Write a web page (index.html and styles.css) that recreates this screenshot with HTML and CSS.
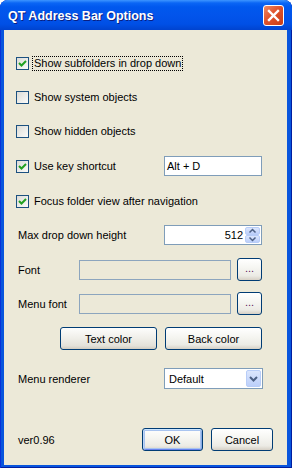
FILE: index.html
```html
<!DOCTYPE html>
<html lang="en">
<head>
    <meta charset="UTF-8">
    <title>QT Address Bar Options</title>
    <link rel="stylesheet" href="styles.css">
</head>
<body>

    <div class="window">
        <div class="titlebar">
            <span class="title">QT Address Bar Options</span>
            <span class="close">
                <svg width="21" height="21" viewBox="0 0 21 21"><path d="M6 6 L15 15 M15 6 L6 15" stroke="#fff" stroke-width="2.4" stroke-linecap="square"/></svg>
            </span>
        </div>

        <div class="client">
            <div class="row r1">
                <span class="check"><svg width="11" height="11" viewBox="0 0 11 11"><path d="M2 5 L4.5 7.5 L9 3" fill="none" stroke="#21a121" stroke-width="2"/></svg></span>
                <span class="cap focus">Show subfolders in drop down</span>
            </div>
            <div class="row r2">
                <span class="check"></span>
                <span class="cap">Show system objects</span>
            </div>
            <div class="row r3">
                <span class="check"></span>
                <span class="cap">Show hidden objects</span>
            </div>
            <div class="row r4">
                <span class="check"><svg width="11" height="11" viewBox="0 0 11 11"><path d="M2 5 L4.5 7.5 L9 3" fill="none" stroke="#21a121" stroke-width="2"/></svg></span>
                <span class="cap">Use key shortcut</span>
                <span class="textbox key">Alt + D</span>
            </div>
            <div class="row r5">
                <span class="check"><svg width="11" height="11" viewBox="0 0 11 11"><path d="M2 5 L4.5 7.5 L9 3" fill="none" stroke="#21a121" stroke-width="2"/></svg></span>
                <span class="cap">Focus folder view after navigation</span>
            </div>
            <div class="row r6">
                <span class="label">Max drop down height</span>
                <span class="textbox spin">
                    <span class="num">512</span>
                    <span class="spinbtns">
                        <span class="sb"><svg width="13" height="8" viewBox="0 0 13 8"><path d="M3.5 5.5 L6.5 2.5 L9.5 5.5" fill="none" stroke="#4d6185" stroke-width="1.5"/></svg></span>
                        <span class="sb"><svg width="13" height="8" viewBox="0 0 13 8"><path d="M3.5 2.5 L6.5 5.5 L9.5 2.5" fill="none" stroke="#4d6185" stroke-width="1.5"/></svg></span>
                    </span>
                </span>
            </div>
            <div class="row r7">
                <span class="label fontlabel">Font</span>
                <span class="textbox ro"></span>
                <span class="btn dots">...</span>
            </div>
            <div class="row r8">
                <span class="label fontlabel">Menu font</span>
                <span class="textbox ro"></span>
                <span class="btn dots">...</span>
            </div>
            <div class="row r9">
                <span class="btn color text-color">Text color</span>
                <span class="btn color">Back color</span>
            </div>
            <div class="row r10">
                <span class="label">Menu renderer</span>
                <span class="combo">
                    <span class="combo-val">Default</span>
                    <span class="combo-btn"><svg width="15" height="17" viewBox="0 0 15 17"><path d="M4 7 L7.5 10.5 L11 7" fill="none" stroke="#4d6185" stroke-width="2"/></svg></span>
                </span>
            </div>
            <div class="row r11">
                <span class="label">ver0.96</span>
                <span class="btn ok">OK</span>
                <span class="btn cancel">Cancel</span>
            </div>
        </div>
    </div>

</body>
</html>
```

FILE: styles.css
```css
body {
    margin: 0;
    padding: 0;
    background-color: #fff;
    font-family: "Liberation Sans", Arial, sans-serif;
    font-size: 11px;
    color: #000;
}

.window {
    width: 292px;
    height: 468px;
    display: flex;
    flex-direction: column;
    background-color: #0855dd;
    border-radius: 8px 8px 0 0;
    box-shadow: inset 1px 0 #0831d9, inset -1px 0 #001ea0, inset 0 -1px #001ea0;
}

.titlebar {
    height: 30px;
    display: flex;
    align-items: center;
    padding-left: 8px;
    border-radius: 8px 8px 0 0;
    background: linear-gradient(#3d95ff 0, #0a66f5 3px, #0058ee 7px, #0254eb 50%, #0050e6 80%, #0043cf 100%);
}

.title {
    flex: 1;
    padding-top: 2px;
    color: #fff;
    font-weight: bold;
    font-size: 12.5px;
    text-shadow: 1px 1px #0a1e80;
}

.close {
    width: 21px;
    height: 21px;
    margin-right: 8px;
    margin-top: 1px;
    box-sizing: border-box;
    border: 1px solid #fff;
    border-radius: 3px;
    background: linear-gradient(135deg, #ec8a66, #e0532c 45%, #c83c14);
    display: flex;
    align-items: center;
    justify-content: center;
}

.close svg {
    margin: -1px;
}

.client {
    flex: 1;
    margin: 0 5px 3px 4px;
    padding: 0 25px 0 12px;
    background-color: #ece9d8;
    display: flex;
    flex-direction: column;
}

.row {
    display: flex;
    align-items: center;
    height: 20px;
}

.r1 { margin-top: 23px; }
.r2 { margin-top: 14px; }
.r3 { margin-top: 14px; }
.r4 { margin-top: 15px; }
.r5 { margin-top: 15px; }
.r6 { margin-top: 14px; }
.r7 { margin-top: 13px; height: 23px; }
.r8 { margin-top: 11px; height: 23px; }
.r9 { margin-top: 12px; height: 23px; }
.r10 { margin-top: 18px; height: 21px; }
.r11 { margin-top: 39px; height: 23px; margin-right: -11px; }

.check {
    width: 13px;
    height: 13px;
    box-sizing: border-box;
    border: 1px solid #1c5180;
    background: linear-gradient(135deg, #dcdcd7, #fbfbf9);
    display: flex;
}

.cap {
    margin-left: 3px;
    padding: 0 1px;
    line-height: 13px;
    border: 1px dotted transparent;
}

.cap.focus {
    border-color: #000;
}

.label {
    padding-left: 2px;
}

.textbox {
    box-sizing: border-box;
    height: 20px;
    border: 1px solid #7f9db9;
    background-color: #fff;
    display: flex;
    align-items: center;
}

.key {
    width: 98px;
    margin-left: auto;
    padding-left: 2px;
}

.spin {
    width: 98px;
    margin-left: auto;
    padding: 1px;
}

.num {
    flex: 1;
    text-align: right;
    padding-right: 2px;
}

.spinbtns {
    width: 15px;
    height: 16px;
    display: flex;
    flex-direction: column;
}

.sb {
    flex: 1;
    box-sizing: border-box;
    border: 1px solid #b8cdf8;
    border-radius: 2px;
    background: linear-gradient(#dbe6fd, #bccffa);
    display: flex;
    align-items: center;
    justify-content: center;
    overflow: hidden;
}

.fontlabel {
    width: 61px;
}

.ro {
    width: 152px;
    background-color: #ece9d8;
    border-color: #8ca5be;
}

.btn {
    box-sizing: border-box;
    height: 23px;
    border: 1px solid #003c74;
    border-radius: 3px;
    background: linear-gradient(#ffffff, #f6f6f2 40%, #ecebe5 80%, #d6d0c5);
    display: flex;
    align-items: center;
    justify-content: center;
}

.dots {
    width: 25px;
    margin-left: 6px;
    color: #602060;
    padding-bottom: 3px;
}

.color {
    width: 97px;
}

.text-color {
    margin-left: 44px;
    margin-right: 8px;
    background: linear-gradient(#fdfdfc, #efeee8 50%, #e3e1d9 85%, #d2ccc0);
}

.combo {
    width: 99px;
    height: 21px;
    margin-left: auto;
    margin-right: -1px;
    box-sizing: border-box;
    border: 1px solid #7f9db9;
    background-color: #fff;
    display: flex;
    align-items: center;
    padding: 1px;
}

.combo-val {
    flex: 1;
    padding-left: 3px;
}

.combo-btn {
    width: 15px;
    height: 17px;
    box-sizing: border-box;
    border: 1px solid #b8cdf8;
    border-radius: 2px;
    background: linear-gradient(#dbe6fd, #bccffa);
    display: flex;
}

.combo-btn svg {
    margin: -1px;
}

.ok {
    width: 61px;
    margin-left: auto;
    margin-right: 8px;
    box-shadow: inset 0 1px #cee7ff, inset 1px 0 #bcd4f6, inset -1px 0 #89ade4, inset 0 -1px #6982ee, inset 0 0 0 2px #a9c4f0;
}

.cancel {
    width: 62px;
}
```
